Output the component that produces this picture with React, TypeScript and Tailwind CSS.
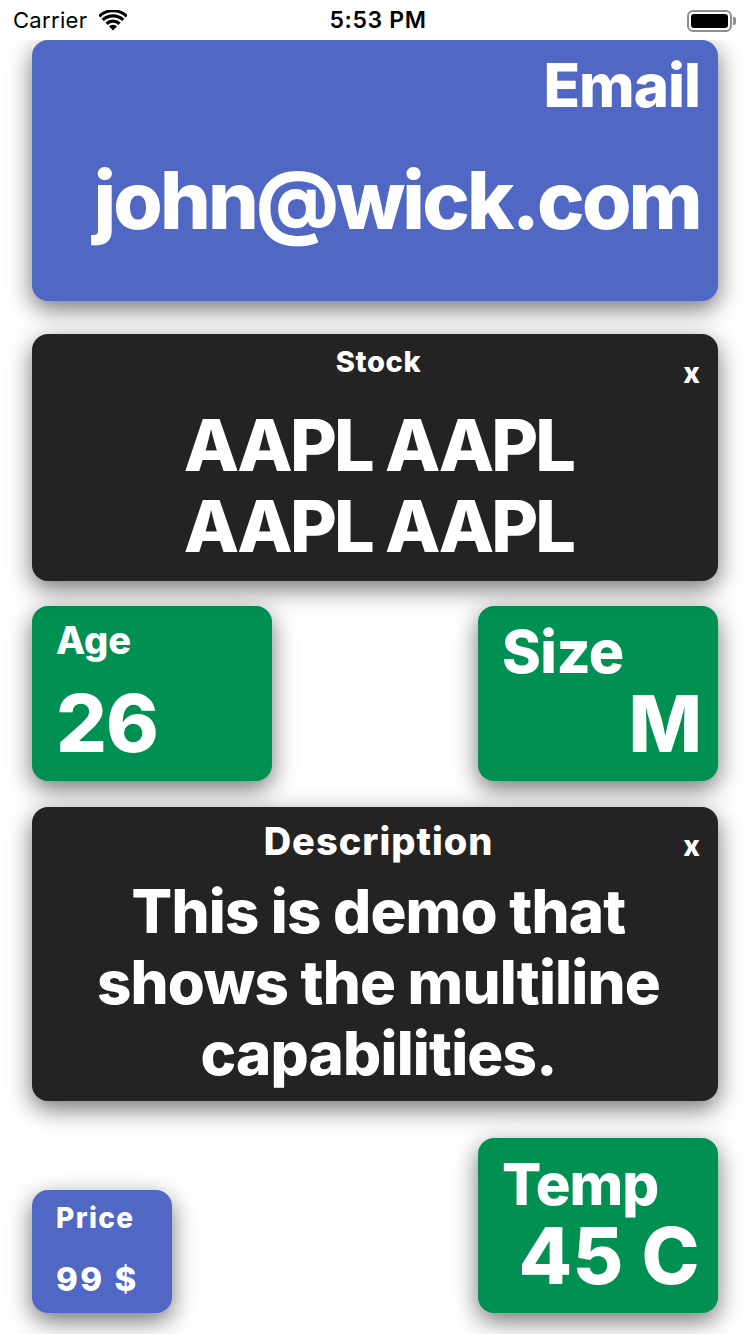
import React from "react";

const font = { fontFamily: "Inter, 'Noto Sans', sans-serif" };

function Wifi() {
  return (
    <svg width="28" height="21" viewBox="0 0 28 21" className="block">
      <path d="M14 20.5 L10 16.3 A6 6 0 0 1 18 16.3 Z" fill="#000" />
      <path d="M6.4 12.6 A11 11 0 0 1 21.6 12.6 L19.4 14.9 A8 8 0 0 0 8.6 14.9 Z" fill="#000" />
      <path d="M2.6 8.8 A16.5 16.5 0 0 1 25.4 8.8 L23.2 11.1 A13.3 13.3 0 0 0 4.8 11.1 Z" fill="#000" />
      <path d="M-0.8 5.2 A21.5 21.5 0 0 1 28.8 5.2 L26.7 7.4 A18.4 18.4 0 0 0 1.3 7.4 Z" fill="#000" />
    </svg>
  );
}

function StatusBar() {
  return (
    <div className="relative h-[40px] bg-white" style={font}>
      <div className="absolute left-[13px] top-[6px] flex items-center gap-[12px]">
        <span className="text-[22px] leading-[28px] tracking-[0.3px] text-black">Carrier</span>
        <Wifi />
      </div>
      <div className="absolute left-[6px] right-0 top-[6px] text-center text-[23px] leading-[28px] font-semibold tracking-[0.6px] text-black">
        5:53 PM
      </div>
      <div className="absolute left-[687px] top-[10px] flex items-center">
        <div className="h-[22px] w-[45px] rounded-[6px] border-[2px] border-[#8e8e8e] p-[2px]">
          <div className="h-full w-full rounded-[3px] bg-black" />
        </div>
        <div className="ml-[1px] h-[8px] w-[3px] rounded-r-[2px] bg-[#8e8e8e]" />
      </div>
    </div>
  );
}

const shadow = "shadow-[0_8px_24px_rgba(0,0,0,0.55)]";

export default function App() {
  return (
    <div className="w-[750px] h-[1334px] bg-white overflow-hidden text-white" style={font}>
      <StatusBar />
      <div className="px-[32px] flex flex-col">
        {/* Email */}
        <div className={`h-[261px] rounded-[16px] bg-[#5067c4] ${shadow} pt-[15px] pr-[18px] flex flex-col items-end`}>
          <div className="text-[60px] leading-[60px] font-extrabold tracking-[-1px]">Email</div>
          <div className="mt-[45px] text-[80px] leading-[80px] font-extrabold tracking-[-2.8px]">john@wick.com</div>
        </div>

        {/* Stock */}
        <div className={`relative mt-[33px] rounded-[16px] bg-[#232323] ${shadow} pt-[14px] pb-[15px] pl-[7px] flex flex-col items-center`}>
          <div className="text-[29px] leading-[28px] font-extrabold tracking-[0.6px]">Stock</div>
          <div className="absolute right-[18px] top-[25px] text-[28px] leading-[28px] font-extrabold">x</div>
          <div className="mt-[28px] text-[72px] leading-[81px] font-extrabold text-center tracking-[-2.8px]">
            AAPL AAPL
            <br />
            AAPL AAPL
          </div>
        </div>

        {/* Age / Size */}
        <div className="mt-[25px] flex justify-between">
          <div className={`w-[240px] h-[175px] rounded-[16px] bg-[#009051] ${shadow} pt-[15px] pl-[24px] flex flex-col`}>
            <div className="text-[38px] leading-[38px] font-extrabold tracking-[0px]">Age</div>
            <div className="mt-[24px] text-[80px] leading-[80px] font-extrabold tracking-[-1px]">26</div>
          </div>
          <div className={`w-[240px] h-[175px] rounded-[16px] bg-[#009051] ${shadow} pt-[16px] pr-[17px] pl-[24px] flex flex-col`}>
            <div className="text-[59px] leading-[59px] font-extrabold tracking-[-0.6px]">Size</div>
            <div className="mt-[4px] self-end text-[78px] leading-[78px] font-extrabold tracking-[-1px]">M</div>
          </div>
        </div>

        {/* Description */}
        <div className={`relative mt-[26px] rounded-[16px] bg-[#232323] ${shadow} pt-[16px] pb-[12px] pl-[7px] flex flex-col items-center`}>
          <div className="text-[38px] leading-[36px] font-extrabold tracking-[1px]">Description</div>
          <div className="absolute right-[18px] top-[25px] text-[28px] leading-[28px] font-extrabold">x</div>
          <div className="mt-[17px] text-[60px] leading-[71px] font-extrabold text-center tracking-[-0.8px]">
            This is demo that
            <br />
            shows the multiline
            <br />
            capabilities.
          </div>
        </div>

        {/* Price / Temp */}
        <div className="mt-[37px] flex justify-between items-end">
          <div className={`w-[140px] h-[123px] rounded-[16px] bg-[#5067c4] ${shadow} pt-[14px] pl-[24px] flex flex-col`}>
            <div className="text-[28px] leading-[28px] font-extrabold tracking-[1.4px]">Price</div>
            <div className="mt-[31px] text-[33px] leading-[32px] font-extrabold tracking-[2.5px]">99 $</div>
          </div>
          <div className={`w-[240px] h-[175px] rounded-[16px] bg-[#009051] ${shadow} pt-[21px] pl-[24px] pr-[18px] flex flex-col`}>
            <div className="text-[58px] leading-[50px] font-extrabold tracking-[-1px]">Temp</div>
            <div className="mt-[11px] self-end text-[78px] leading-[72px] font-extrabold tracking-[0.5px]">45 C</div>
          </div>
        </div>
      </div>
    </div>
  );
}
